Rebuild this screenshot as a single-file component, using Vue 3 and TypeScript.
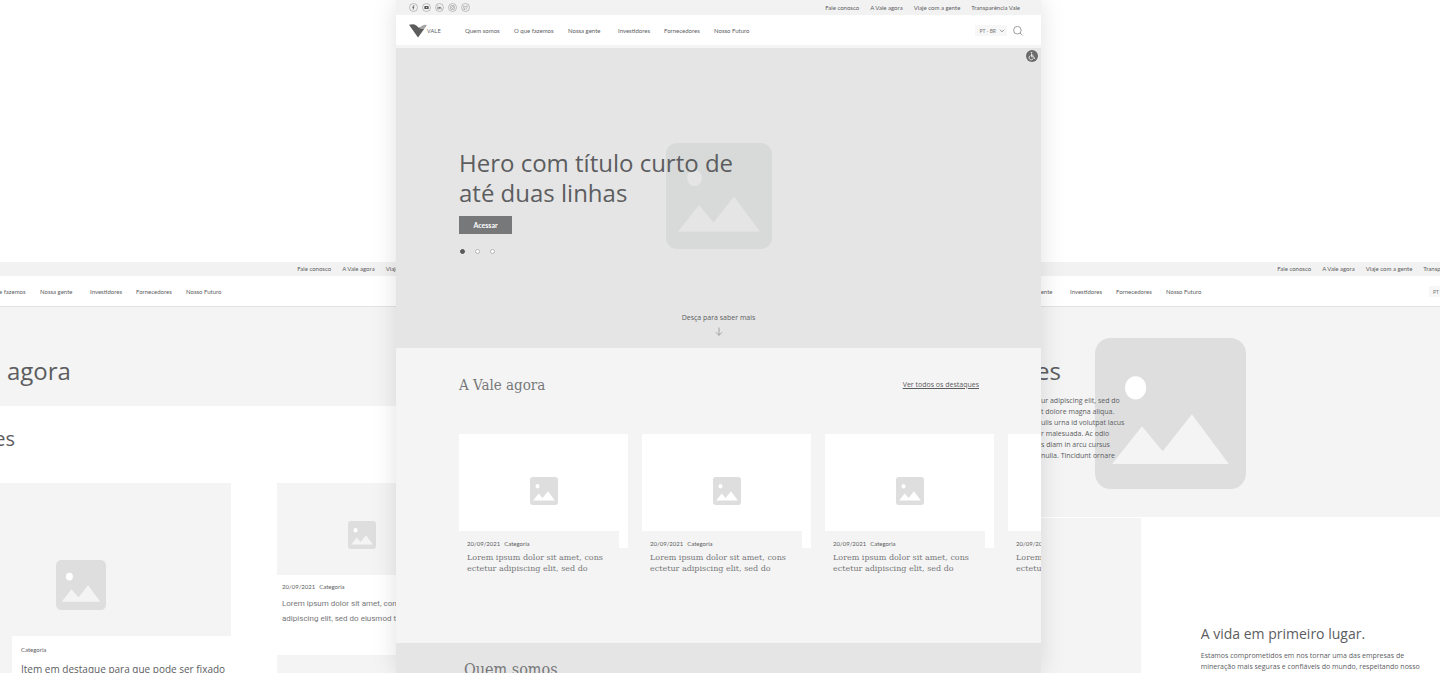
<script setup lang="ts">
interface Link {
  label: string
  href: string
}

const topLinks: Link[] = [
  { label: 'Fale conosco', href: '#fale-conosco' },
  { label: 'A Vale agora', href: '#a-vale-agora' },
  { label: 'Viaje com a gente', href: '#viaje' },
  { label: 'Transparência Vale', href: '#transparencia' },
]

const mainLinks: Link[] = [
  { label: 'Quem somos', href: '#quem-somos' },
  { label: 'O que fazemos', href: '#o-que-fazemos' },
  { label: 'Nossa gente', href: '#nossa-gente' },
  { label: 'Investidores', href: '#investidores' },
  { label: 'Fornecedores', href: '#fornecedores' },
  { label: 'Nosso Futuro', href: '#nosso-futuro' },
]

const socials: string[] = ['Facebook', 'YouTube', 'LinkedIn', 'Instagram', 'Twitter']

const cards: number[] = [1, 2, 3, 4]

const introLines: string[] = [
  'ur adipiscing elit, sed do',
  't dolore magna aliqua.',
  'ulis urna id volutpat lacus',
  'r malesuada. Ac odio',
  's diam in arcu cursus',
  'nulla. Tincidunt ornare',
]
</script>

<template>
  <div class="stage">
    <svg class="defs" aria-hidden="true">
      <symbol id="picture" viewBox="0 0 106 106">
        <rect width="106" height="106" rx="11" fill="var(--frame)" />
        <ellipse cx="28.5" cy="35" rx="7.4" ry="8.2" fill="var(--sun)" />
        <path d="M12 88.500 33 62 47.500 79.500 68 53.500 94 88.500Z" fill="var(--hills)" />
      </symbol>
    </svg>

    <!-- Listing page -->
    <section class="side side-left">
      <div class="sheet">
        <header>
          <div class="topbar">
            <nav class="top-links">
              <a v-for="l in topLinks" :key="l.label" :href="l.href">{{ l.label }}</a>
            </nav>
          </div>
          <div class="mainbar">
            <nav class="main-links">
              <a v-for="l in mainLinks" :key="l.label" :href="l.href">{{ l.label }}</a>
            </nav>
          </div>
        </header>
      </div>
      <div class="list-banner"><h1>agora</h1></div>
      <h2 class="list-title">es</h2>
      <div class="list-grid">
        <article class="feature">
          <div class="feature-thumb"><svg class="pic-medium"><use href="#picture" /></svg></div>
          <div class="feature-text">
            <p class="meta">Categoria</p>
            <h3>Item em destaque para que pode ser fixado</h3>
          </div>
        </article>
        <div class="list-column">
          <article>
            <div class="item-thumb"><svg class="pic-small"><use href="#picture" /></svg></div>
            <div class="item-text">
              <p class="meta"><span>20/09/2021</span><span>Categoria</span></p>
              <p class="item-copy">Lorem ipsum dolor sit amet, consectetur<br />adipiscing elit, sed do eiusmod tempor</p>
            </div>
          </article>
          <div class="item-thumb"></div>
        </div>
      </div>
    </section>

    <!-- Home page -->
    <main class="home">
      <header>
        <div class="topbar">
          <nav class="socials">
            <a v-for="(name, i) in socials" :key="name" :href="'#' + name.toLowerCase()" :aria-label="name">
              <svg viewBox="0 0 18 18" fill="none" stroke="#888" stroke-width="1">
                <circle cx="9" cy="9" r="8" />
                <path v-if="i === 0" d="M10.8 5.4H9.6q-1 0-1 1V13M6.8 8.7h3.6" stroke="#555" stroke-width="1.6" />
                <template v-else-if="i === 1">
                  <rect x="4.6" y="6" width="8.8" height="6.2" rx="1.8" fill="#555" stroke="none" />
                  <path d="M8 7.6v3l2.6-1.5Z" fill="#f2f2f2" stroke="none" />
                </template>
                <path v-else-if="i === 2" d="M5.8 8v4.6M5.8 5.2v1.4M8.4 12.6V8M8.4 10q0-1.6 1.8-1.6T12 10v2.6" stroke="#555" stroke-width="1.5" />
                <template v-else-if="i === 3">
                  <rect x="5" y="5" width="8" height="8" rx="2" />
                  <circle cx="9" cy="9" r="2" />
                  <path d="M11 6.6h1" />
                </template>
                <path v-else d="M5 12.3q4 2 6.2-1.2 1-1.6.8-3.6l1-1.5-1.4.2Q9.8 4.6 9 7.6 6.6 7.6 5.3 5.8 4.6 8 6.2 9.4L5.3 9.3Q5.6 10.8 7 11.2 6.3 12.2 5 12.3Z" />
              </svg>
            </a>
          </nav>
          <nav class="top-links">
            <a v-for="l in topLinks" :key="l.label" :href="l.href">{{ l.label }}</a>
          </nav>
        </div>
        <div class="mainbar">
          <a class="logo" href="#inicio">
            <svg viewBox="0 0 18 14" aria-hidden="true">
              <path d="M0 .8Q3 0 5.500.4 8 1.200 9.500 3.600 12 4.800 15.500 4.600L9 13.600Z" fill="#5c5c5c" />
              <path d="M9.500 3.600Q12 2.800 13.500 1.400 15.500.4 18 1L15.500 4.600Q12.500 6 9.500 3.600Z" fill="#a4a4a4" />
            </svg>
            <span>VALE</span>
          </a>
          <nav class="main-links">
            <a v-for="l in mainLinks" :key="l.label" :href="l.href">{{ l.label }}</a>
          </nav>
          <button class="language" type="button">
            PT - BR
            <svg viewBox="0 0 6 4" fill="none" stroke="#777" stroke-width=".8"><path d="m1 .8 2 2 2-2" /></svg>
          </button>
          <button class="search" type="button" aria-label="Buscar">
            <svg viewBox="0 0 10 10" fill="none" stroke="#777" stroke-width=".7"><circle cx="4.4" cy="4.2" r="3.8" /><path d="m7.1 7 2.3 2.3" /></svg>
          </button>
        </div>
      </header>

      <section class="hero">
        <svg class="hero-pic"><use href="#picture" /></svg>
        <button class="access" type="button" aria-label="Acessibilidade">
          <svg viewBox="0 0 24 24" fill="none" stroke="#eee" stroke-width="1.8">
            <circle cx="12" cy="12" r="12" fill="#6a6a6a" stroke="none" />
            <circle cx="11" cy="5.5" r="1.6" fill="#eee" stroke="none" />
            <path d="M11 7.5v6h4.500l2 4.500M11 10.300h4M9 11.200a4.300 4.300 0 1 0 5.500 5.500" />
          </svg>
        </button>
        <div class="hero-text">
          <h1>Hero com título curto de<br />até duas linhas</h1>
          <a class="cta" href="#acessar">Acessar</a>
          <div class="dots">
            <button v-for="n in 3" :key="n" type="button" :class="{ active: n === 1 }" :aria-label="'Slide ' + n"></button>
          </div>
        </div>
        <a class="scroll" href="#a-vale-agora">
          <span>Desça para saber mais</span>
          <svg viewBox="0 0 8 9" fill="none" stroke="#888" stroke-width=".7"><path d="M4 .5v7.700M1 5.300l3 3 3-3" /></svg>
        </a>
      </section>

      <section class="news">
        <div class="news-head">
          <h2>A Vale agora</h2>
          <a href="#destaques">Ver todos os destaques</a>
        </div>
        <div class="cards">
          <article v-for="c in cards" :key="c" class="card">
            <div class="card-thumb"><svg class="pic-small"><use href="#picture" /></svg></div>
            <div class="card-text">
              <p class="meta"><span>20/09/2021</span><span>Categoria</span></p>
              <h3>Lorem ipsum dolor sit amet, cons<br />ectetur adipiscing elit, sed do</h3>
            </div>
          </article>
        </div>
      </section>

      <section class="about"><h2>Quem somos</h2></section>
    </main>

    <!-- Inner page -->
    <section class="side side-right">
      <div class="sheet">
        <header>
          <div class="topbar">
            <nav class="top-links">
              <a v-for="l in topLinks" :key="l.label" :href="l.href">{{ l.label }}</a>
            </nav>
          </div>
          <div class="mainbar">
            <nav class="main-links">
              <a v-for="l in mainLinks" :key="l.label" :href="l.href">{{ l.label }}</a>
            </nav>
            <button class="language" type="button">PT - BR</button>
          </div>
        </header>
      </div>
      <div class="inner-banner">
        <svg class="inner-pic"><use href="#picture" /></svg>
        <div class="inner-text">
          <h1>es</h1>
          <p><template v-for="line in introLines" :key="line">{{ line }}<br /></template></p>
        </div>
      </div>
      <div class="inner-body">
        <div class="inner-block"></div>
        <div class="inner-copy">
          <h2>A vida em primeiro lugar.</h2>
          <p>Estamos comprometidos em nos tornar uma das empresas de<br />mineração mais seguras e confiáveis do mundo, respeitando nosso</p>
        </div>
      </div>
    </section>
  </div>
</template>

<style>
body {
  margin: 0;
  background: #fff;
}
</style>

<style scoped>
.stage {
  --frame: #dedede;
  --sun: #fff;
  --hills: #f4f4f4;
  display: grid;
  grid-template-columns: 396fr 645fr 399fr;
  height: 100vh;
  overflow: hidden;
  color: #5c5d5f;
  font-family: "Open Sans", "Noto Sans", sans-serif;
}
.defs {
  position: absolute;
  width: 0;
  height: 0;
}
h1, h2, h3, p {
  margin: 0;
  font-weight: 400;
  white-space: nowrap;
}
a {
  color: inherit;
  text-decoration: none;
  white-space: nowrap;
}
button {
  padding: 0;
  border: 0;
  background: none;
  color: inherit;
  font: inherit;
}
svg {
  display: block;
}

/* Shared header */
.topbar {
  display: flex;
  align-items: center;
  justify-content: flex-end;
  height: 15px;
  padding: 0 21px 0 13px;
  background: #f2f2f2;
}
.mainbar {
  display: flex;
  align-items: center;
  height: 29px;
  padding: 1px 18px 0 69px;
  background: #fff;
}
.top-links, .main-links {
  font-family: Lato, sans-serif;
  font-size: 6px;
  line-height: 10px;
}
.top-links {
  display: flex;
  gap: 11px;
}
.main-links {
  display: grid;
  grid-template-columns: 49px 54px 50px 46px 50px 36px;
}
.language {
  display: flex;
  align-items: center;
  gap: 3px;
  height: 11px;
  margin-left: auto;
  padding: 0 2px 0 4px;
  background: #f7f7f7;
  color: #77787a;
  font-family: Lato, sans-serif;
  font-size: 5px;
  line-height: 10px;
  white-space: nowrap;
}
.language svg {
  width: 6px;
  height: 4px;
}

/* Side pages */
.side {
  min-width: 0;
  margin-top: 262px;
  overflow: hidden;
}
.sheet {
  width: 645px;
}
.sheet .topbar {
  height: 14px;
}
.side-left .sheet {
  margin-left: -132px;
}
.side-right .sheet {
  margin-left: -193px;
}
.side-right .language {
  width: 31px;
  margin-right: 15px;
}
.list-banner {
  height: 99px;
  border-top: 1px solid #e2e2e2;
  background: #f4f4f4;
}
.list-banner h1 {
  padding: 49px 7px 0;
  font-size: 24px;
  line-height: 30px;
}
.list-title {
  display: flex;
  justify-content: flex-end;
  width: 15px;
  padding-top: 20px;
  font-size: 20px;
  line-height: 26px;
}
.list-grid {
  display: grid;
  grid-template-columns: 231px 169px;
  gap: 46px;
  padding-top: 31px;
}
.feature {
  background: #f4f4f4;
}
.feature-thumb {
  display: flex;
  justify-content: center;
  align-items: flex-end;
  height: 127px;
  padding: 0 69px 26px 0;
}
.feature-text {
  margin-left: 12px;
  padding: 9px 9px 20px;
  background: #fff;
}
.feature-text h3 {
  margin-top: 5px;
  font-size: 10px;
  line-height: 18px;
}
.list-column {
  display: grid;
  gap: 29px;
  align-content: start;
}
.item-thumb {
  display: grid;
  place-items: center;
  height: 92px;
  background: #f4f4f4;
}
.item-thumb svg {
  margin-top: 11px;
}
.item-text {
  padding: 7px 5px 0;
}
.item-copy {
  margin-top: 4px;
  color: #77787a;
  font-family: Roboto, sans-serif;
  font-size: 8px;
  line-height: 15px;
}
.meta {
  display: flex;
  gap: 4px;
  font-family: Lato, sans-serif;
  font-size: 6px;
  line-height: 10px;
}
.pic-medium {
  width: 50px;
  height: 50px;
}
.pic-small {
  width: 28px;
  height: 28px;
}

/* Home page */
.home {
  position: relative;
  z-index: 1;
  display: flex;
  flex-direction: column;
  min-width: 0;
  overflow: hidden;
  background: #f4f4f4;
  box-shadow: 0 0 24px rgba(0, 0, 0, 0.12);
}
.home > * {
  flex-shrink: 0;
}
.home .topbar {
  justify-content: space-between;
}
.home .mainbar {
  padding-left: 13px;
}
.socials {
  display: flex;
  gap: 4px;
}
.socials svg {
  width: 9px;
  height: 9px;
}
.logo {
  display: flex;
  align-items: center;
  width: 56px;
  font-size: 6px;
  line-height: 8px;
}
.logo svg {
  width: 18px;
  height: 14px;
}
.search {
  margin-left: 6px;
}
.search svg {
  width: 10px;
  height: 10px;
}
.hero {
  --frame: #d8dad9;
  --sun: #e5e5e5;
  --hills: #e5e5e5;
  position: relative;
  display: flex;
  flex-direction: column;
  align-items: center;
  justify-content: space-between;
  height: 188px;
  margin-top: 3px;
  padding: 100px 63px 12px;
  background: #e5e5e5;
}
.hero-pic {
  position: absolute;
  top: 95px;
  left: calc(50% - 53px);
  width: 106px;
  height: 106px;
}
.access {
  position: absolute;
  top: 2px;
  right: 3px;
}
.access svg {
  width: 12px;
  height: 12px;
}
.hero-text {
  position: relative;
  width: 100%;
}
.hero-text h1 {
  font-size: 24px;
  line-height: 30px;
}
.cta {
  display: block;
  width: 53px;
  margin-top: 8px;
  background: #77787a;
  color: #fff;
  font-family: Lato, sans-serif;
  font-size: 7px;
  font-weight: 700;
  line-height: 18px;
  text-align: center;
}
.dots {
  display: flex;
  gap: 10px;
  margin-top: 15px;
  padding-left: 1px;
}
.dots button {
  box-sizing: border-box;
  width: 5px;
  height: 5px;
  border: 1px solid #b5b5b5;
  border-radius: 50%;
  background: #fff;
}
.dots .active {
  border-color: #58595b;
  background: #58595b;
}
.scroll {
  display: grid;
  justify-items: center;
  gap: 3px;
  font-size: 7px;
  line-height: 12px;
}
.scroll svg {
  width: 8px;
  height: 9px;
}
.news {
  --hills: #fff;
  height: 269px;
  padding: 26px 0 0 63px;
}
.news-head {
  display: flex;
  align-items: center;
  justify-content: space-between;
  padding-right: 62px;
}
.news-head h2, .about h2 {
  color: #77787a;
  font-family: "DejaVu Serif Condensed", "DejaVu Serif", serif;
  font-size: 15px;
  line-height: 22px;
}
.news-head a {
  font-size: 7px;
  line-height: 12px;
  text-decoration: underline;
}
.cards {
  display: flex;
  gap: 14px;
  margin-top: 38px;
  overflow: hidden;
}
.card {
  flex: 0 0 169px;
}
.card-thumb {
  display: grid;
  justify-content: center;
  align-content: start;
  height: 71px;
  padding-top: 43px;
  background: #fff;
}
.card-text {
  margin: -17px 9px 0 0;
  padding: 8px 8px 0;
  background: #f4f4f4;
}
.card-text h3 {
  margin-top: 3px;
  color: #77787a;
  font-family: "DejaVu Serif", serif;
  font-size: 8px;
  line-height: 11px;
}
.about {
  flex: 1;
  padding: 16px 68px;
  background: #e5e5e5;
}
.about h2 {
  font-size: 16px;
}

/* Inner page */
.inner-banner {
  position: relative;
  height: 210px;
  border-top: 1px solid #e2e2e2;
  border-bottom: 1px solid #fff;
  background: #f4f4f4;
}
.inner-pic {
  position: absolute;
  top: 31px;
  left: 54px;
  width: 151px;
  height: 151px;
}
.inner-text {
  position: relative;
  padding-top: 49px;
}
.inner-text h1 {
  display: flex;
  justify-content: flex-end;
  width: 20px;
  font-size: 24px;
  line-height: 30px;
}
.inner-text p {
  margin-top: 9px;
  font-size: 7px;
  line-height: 11px;
}
.inner-body {
  display: grid;
  grid-template-columns: 1fr 3fr;
  height: 200px;
  background: #fff;
}
.inner-block {
  background: #f4f4f4;
}
.inner-copy {
  padding: 106px 0 0 60px;
}
.inner-copy h2 {
  font-size: 14px;
  line-height: 20px;
}
.inner-copy p {
  margin-top: 6px;
  font-size: 7px;
  line-height: 11px;
}
</style>
